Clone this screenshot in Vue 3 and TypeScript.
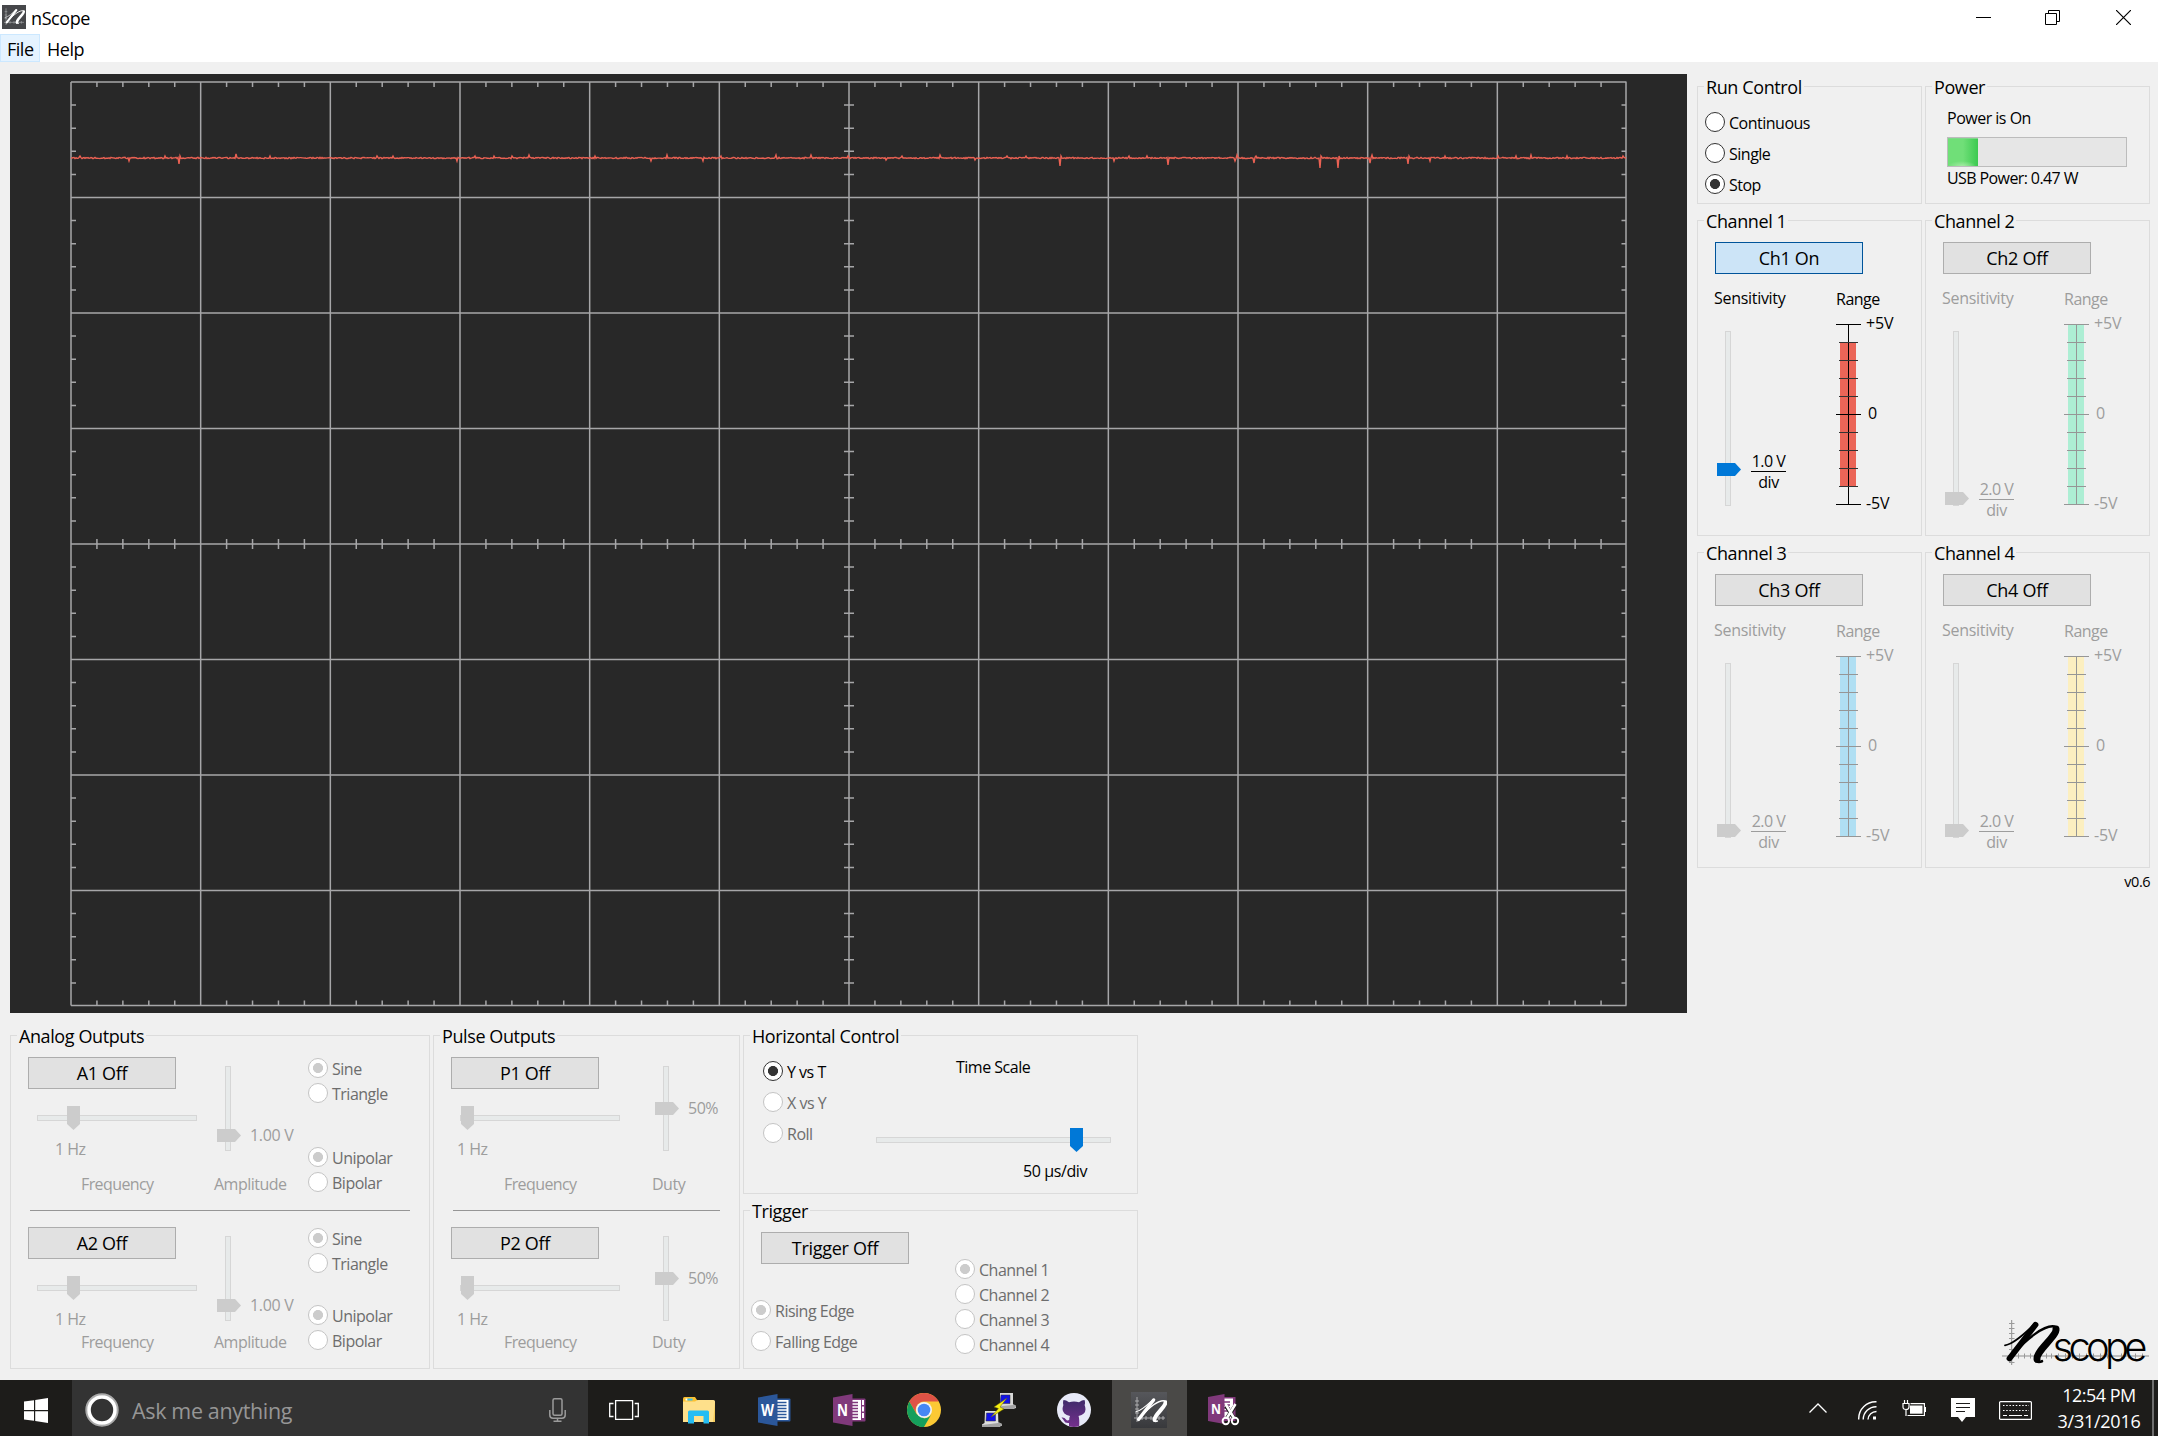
<script setup lang="ts">
interface Channel {
  name: string
  button: string
  on: boolean
  sensitivity: string
  handle: number
  color: string
  rangeTop: number
  rangeHeight: number
}

const channels: Channel[] = [
  { name: 'Channel 1', button: 'Ch1 On', on: true, sensitivity: '1.0 V', handle: 132, color: '#eb6557', rangeTop: 18, rangeHeight: 144 },
  { name: 'Channel 2', button: 'Ch2 Off', on: false, sensitivity: '2.0 V', handle: 161, color: '#adeed4', rangeTop: 0, rangeHeight: 180 },
  { name: 'Channel 3', button: 'Ch3 Off', on: false, sensitivity: '2.0 V', handle: 161, color: '#b0dff3', rangeTop: 0, rangeHeight: 180 },
  { name: 'Channel 4', button: 'Ch4 Off', on: false, sensitivity: '2.0 V', handle: 161, color: '#fcefc0', rangeTop: 0, rangeHeight: 180 },
]

const runModes = [
  { label: 'Continuous', checked: false },
  { label: 'Single', checked: false },
  { label: 'Stop', checked: true },
]
const plotModes = [
  { label: 'Y vs T', checked: true, enabled: true },
  { label: 'X vs Y', checked: false, enabled: false },
  { label: 'Roll', checked: false, enabled: false },
]
const analogOutputs = ['A1 Off', 'A2 Off']
const pulseOutputs = ['P1 Off', 'P2 Off']
const shapes = ['Sine', 'Triangle']
const polarities = ['Unipolar', 'Bipolar']
const edges = ['Rising Edge', 'Falling Edge']
const sources = ['Channel 1', 'Channel 2', 'Channel 3', 'Channel 4']

// Plot geometry: 12 x 8 divisions, five ticks per division
const left = 61
const right = 1616.5
const top = 8
const bottom = 931.5
const midX = 839
const midY = 470
const divX = 129.667
const divY = 115.5

function gridPath(): string {
  let d = `M${left} ${top}H${right}M${left} ${bottom}H${right}M${left} ${top}V${bottom}M${right - 0.5} ${top}V${bottom}`
  for (let i = 1; i < 12; i++) d += `M${left + i * divX} ${top}V${bottom}`
  for (let i = 1; i < 8; i++) d += `M${left} ${top + i * divY}H${right}`
  for (let i = 1; i < 60; i++) {
    if (i % 5 === 0) continue
    const x = left + (i * divX) / 5
    d += `M${x} ${top}v5M${x} ${midY - 5}v10M${x} ${bottom}v-5`
  }
  for (let i = 1; i < 40; i++) {
    if (i % 5 === 0) continue
    const y = top + (i * divY) / 5
    d += `M${left} ${y}h5M${midX - 5} ${y}h10M${right} ${y}h-5`
  }
  return d
}

const spikes: Record<number, number> = {
  70: -2, 119: 3, 155: -2, 169: 6, 170: -2, 226: -4, 260: -2, 367: -2, 383: -2, 447: 3, 465: -2, 484: -2,
  502: -2, 519: -3, 585: -2, 641: 3, 657: -3, 693: 3, 711: -2, 766: -3, 801: -3, 838: -2, 876: 2, 892: -2,
  930: -3, 965: 2, 997: -2, 1016: -2, 1050: 8, 1051: -2, 1104: 3, 1119: -2, 1137: -2, 1158: 7, 1225: 3,
  1227: -3, 1244: 5, 1246: -2, 1310: 10, 1311: -2, 1328: 10, 1329: -2, 1360: 5, 1362: -3, 1398: 6, 1399: -2,
  1420: 3, 1435: -2, 1488: -2, 1506: -2, 1521: -3, 1557: -2, 1613: -2,
}

function tracePath(): string {
  let seed = 17
  const points: string[] = []
  for (let x = left; x <= right; x++) {
    seed = (seed * 1103515245 + 12345) % 2147483648
    const noise = (seed / 2147483648 - 0.5) * 1.3
    points.push(`${x} ${(84 + (spikes[x] ?? noise)).toFixed(2)}`)
  }
  return 'M' + points.join('L')
}

const grid = gridPath()
const trace = tracePath()
</script>

<template>
  <div class="window">
    <svg class="defs" width="0" height="0">
      <symbol id="mark" viewBox="0 0 62 50">
        <g fill="none" stroke="currentColor" stroke-linecap="round">
          <path d="M5 27.3C14 26 25 15 33 7.5" stroke-width="1.8" />
          <path d="M35.500 6.800L9.500 40.500" stroke-width="5.800" />
          <path d="M14 35C26 22 44 6.500 54.500 8.500" stroke-width="2.400" />
          <path d="M56 11C57 18 36 33 37 41" stroke-width="7" />
          <path d="M36 43.200Q39 44.600 42 43.200" stroke-width="2.600" />
        </g>
      </symbol>
    </svg>

    <header class="titlebar">
      <svg class="app-icon" width="24" height="24" viewBox="0 0 36 36">
        <rect width="36" height="36" fill="#46474a" />
        <path d="M6 5V30M3 26H33M4 10h4M4 15h4M4 20h4M12 24v4M18 24v4M24 24v4M29 24v4" stroke="#a5a6a8" fill="none" />
        <use href="#mark" x="2" y="3" width="34" height="29" color="#fff" />
      </svg>
      <span class="app-name">nScope</span>
      <div class="window-buttons">
        <svg width="15" height="15"><path d="M0 7.5H15" stroke="#000" /></svg>
        <svg class="restore" width="15" height="15" fill="none" stroke="#000"><path d="M.5 3.5h11v11H.5zM3.5 3.5v-3h11v11h-3" /></svg>
        <svg width="15" height="15"><path d="M0 0L15 15M15 0L0 15" stroke="#000" stroke-width="1.2" /></svg>
      </div>
    </header>
    <nav class="menubar">
      <span class="menu-item active">File</span>
      <span class="menu-item">Help</span>
    </nav>

    <main class="main">
      <section class="left-side">
        <svg class="scope" width="1677" height="939">
          <path :d="grid" fill="none" stroke="#a6a6a8" stroke-width="1.5" />
          <path :d="trace" fill="none" stroke="#ea6153" stroke-width="1.4" />
        </svg>

        <div class="outputs">
          <div class="group analog">
            <div class="group-title">Analog Outputs</div>
            <template v-for="(name, i) in analogOutputs" :key="name">
              <hr v-if="i" class="separator" />
              <div class="output" :class="{ compact: i }">
                <div class="freq-col">
                  <button class="btn">{{ name }}</button>
                  <div class="hslider off">
                    <i class="groove" />
                    <svg class="thumb" style="left: 30px" width="13" height="24"><path d="M0 0H13V18L6.5 24L0 18Z" /></svg>
                  </div>
                  <div class="text dim hz">1 Hz</div>
                  <div class="text dim caption freq">Frequency</div>
                </div>
                <div class="amp-col">
                  <div class="slider-row">
                    <div class="vslider off">
                      <i class="groove" />
                      <svg class="thumb" style="top: 63px" width="24" height="13"><path d="M0 0V13H18L24 6.5L18 0Z" /></svg>
                    </div>
                    <div class="text dim amp-value">1.00 V</div>
                  </div>
                  <div class="text dim caption">Amplitude</div>
                </div>
                <div class="radios tight">
                  <label v-for="(s, k) in shapes" :key="s" class="radio off" :class="{ checked: k === 0 }"><i /><span>{{ s }}</span></label>
                  <label v-for="(s, k) in polarities" :key="s" class="radio off" :class="{ checked: k === 0, second: k === 0 }"><i /><span>{{ s }}</span></label>
                </div>
              </div>
            </template>
          </div>

          <div class="group pulse">
            <div class="group-title">Pulse Outputs</div>
            <template v-for="(name, i) in pulseOutputs" :key="name">
              <hr v-if="i" class="separator" />
              <div class="output" :class="{ compact: i }">
                <div class="freq-col">
                  <button class="btn">{{ name }}</button>
                  <div class="hslider off">
                    <i class="groove" />
                    <svg class="thumb" style="left: 1px" width="13" height="24"><path d="M0 0H13V18L6.5 24L0 18Z" /></svg>
                  </div>
                  <div class="text dim hz">1 Hz</div>
                  <div class="text dim caption freq">Frequency</div>
                </div>
                <div class="amp-col">
                  <div class="slider-row">
                    <div class="vslider off">
                      <i class="groove" />
                      <svg class="thumb" style="top: 36px" width="24" height="13"><path d="M0 0V13H18L24 6.5L18 0Z" /></svg>
                    </div>
                    <div class="text dim duty-value">50%</div>
                  </div>
                  <div class="text dim caption">Duty</div>
                </div>
              </div>
            </template>
          </div>

          <div class="stack">
            <div class="group horizontal">
              <div class="group-title">Horizontal Control</div>
              <div class="row">
                <div class="radios plot-modes">
                  <label v-for="m in plotModes" :key="m.label" class="radio" :class="{ checked: m.checked, off: !m.enabled }"><i /><span>{{ m.label }}</span></label>
                </div>
                <div class="time-col">
                  <div class="text time-title">Time Scale</div>
                  <div class="hslider">
                    <i class="groove" />
                    <svg class="thumb" style="left: 194px" width="13" height="24"><path d="M0 0H13V18L6.5 24L0 18Z" /></svg>
                  </div>
                  <div class="text time-value">50 µs/div</div>
                </div>
              </div>
            </div>
            <div class="group trigger">
              <div class="group-title">Trigger</div>
              <div class="row">
                <div class="trigger-col">
                  <button class="btn">Trigger Off</button>
                  <div class="radios">
                    <label v-for="(e, k) in edges" :key="e" class="radio off" :class="{ checked: k === 0 }"><i /><span>{{ e }}</span></label>
                  </div>
                </div>
                <div class="radios tight sources">
                  <label v-for="(s, k) in sources" :key="s" class="radio off" :class="{ checked: k === 0 }"><i /><span>{{ s }}</span></label>
                </div>
              </div>
            </div>
          </div>
        </div>
      </section>

      <aside class="right-side">
        <div class="panels">
          <div class="group run">
            <div class="group-title">Run Control</div>
            <div class="radios run-modes">
              <label v-for="m in runModes" :key="m.label" class="radio" :class="{ checked: m.checked }"><i /><span>{{ m.label }}</span></label>
            </div>
          </div>
          <div class="group power">
            <div class="group-title">Power</div>
            <div class="power-body">
              <div class="text">Power is On</div>
              <div class="progress"><div class="fill" /></div>
              <div class="text usb">USB Power: 0.47 W</div>
            </div>
          </div>

          <div v-for="c in channels" :key="c.name" class="group channel" :class="{ disabled: !c.on }">
            <div class="group-title">{{ c.name }}</div>
            <button class="btn" :class="{ on: c.on }">{{ c.button }}</button>
            <div class="row">
              <div class="sens-col">
                <div class="text sens-title">Sensitivity</div>
                <div class="slider-row">
                  <div class="vslider" :class="{ off: !c.on }">
                    <i class="groove" />
                    <svg class="thumb" :style="{ top: c.handle + 'px' }" width="24" height="13"><path d="M0 0V13H18L24 6.5L18 0Z" /></svg>
                  </div>
                  <div class="fraction" :style="{ marginTop: (c.on ? 120 : 148) + 'px' }">
                    <div class="text">{{ c.sensitivity }}</div>
                    <div class="text divisor">div</div>
                  </div>
                </div>
              </div>
              <div class="range-col">
                <div class="text range-title">Range</div>
                <div class="row">
                  <svg class="gauge" width="25" height="181">
                    <rect x="4" :y="c.rangeTop" width="16" :height="c.rangeHeight" :fill="c.color" />
                    <g :stroke="c.on ? '#000' : '#969696'">
                      <path d="M12.5 0V181M0 .5H25M0 90.5H25M0 180.5H25" />
                      <path v-for="n in [1, 2, 3, 4, 6, 7, 8, 9]" :key="n" :d="`M3 ${n * 18 + 0.5}H22`" :stroke="c.on ? '#333' : '#969696'" />
                    </g>
                  </svg>
                  <div class="scale">
                    <span class="text">+5V</span>
                    <span class="text zero">0</span>
                    <span class="text">-5V</span>
                  </div>
                </div>
              </div>
            </div>
          </div>
        </div>
        <div class="version">v0.6</div>
        <svg class="logo" width="150" height="54">
          <path d="M11.7 2V47M2 38H149" stroke="#8d8d8d" fill="none" />
          <path d="M9 5.5h5.5M9 10.5h5.5M9 15.5h5.5M9 20.5h5.5M9 31.5h5.5M9 44.5h5.5M18.5 35.5v5M24.5 35.5v5M30.5 35.5v5M46.5 35.5v5M51.5 35.5v5M58.5 35.5v5M65.5 35.5v5M72.5 35.5v5M79.5 35.5v5M86.5 35.5v5M93.5 35.5v5M100.5 35.5v5M107.5 35.5v5M121.5 35.5v5M128.5 35.5v5M135.5 35.5v5M142.5 35.5v5" stroke="#999" fill="none" />
          <use href="#mark" width="62" height="50" color="#000" />
          <text x="52.5" y="43" textLength="95" lengthAdjust="spacing" class="logo-text">scope</text>
        </svg>
      </aside>
    </main>

    <footer class="taskbar">
      <div class="start">
        <svg width="24" height="25" viewBox="0 0 24 25" fill="#fff"><path d="M0 3.6L10 2.2V12H0zM11.2 2L24 0V12H11.2zM0 13.2H10V22.8L0 21.4zM11.2 13.2H24V25L11.2 23.1z" /></svg>
      </div>
      <div class="search">
        <svg class="cortana" width="34" height="34"><circle cx="17" cy="17" r="15.5" fill="none" stroke="#aaa" stroke-width="2.4" /><circle cx="17" cy="17" r="13" fill="none" stroke="#fff" stroke-width="3.6" /></svg>
        <span class="search-text">Ask me anything</span>
        <svg class="mic" width="17" height="24" fill="none" stroke="#9b9b9b" stroke-width="1.5"><rect x="4" y=".8" width="9" height="16.5" rx="1.5" /><path d="M.8 12v5q0 3.2 3.2 3.2h9q3.2 0 3.2-3.2v-5M8.500 20v3M4.500 23.200h8" /></svg>
      </div>
      <div class="apps">
        <div class="slot">
          <svg width="30" height="20" fill="none" stroke="#fff" stroke-width="1.3"><path d="M6.600 .7h17v18.600h-17zM4.500 3.500H.7v13h3.800M25.700 3.500h3.600v13h-3.600" /></svg>
        </div>
        <div class="slot">
          <svg width="32" height="28" viewBox="0 0 32 28"><path d="M0 2.500Q0 1 1.500 1H12l2 3v3H0z" fill="#fbc02f" /><rect x="2.500" y="2.500" width="2" height="2" fill="#fff" /><rect x="4.500" y="2.500" width="5" height="2" fill="#39c0f0" /><path d="M0 5.500H12L14.500 4H30.500Q32 4 32 5.500V26H0z" fill="#fee08b" /><path d="M30 26H32V6z" fill="#f5cb5c" /><path d="M5 27.500V16q0-1.500 1.500-1.500h18q1.500 0 1.500 1.500V27.500H20.500V20H11v7.500z" fill="#25bdf3" /></svg>
        </div>
        <div class="slot">
          <svg width="33" height="32" viewBox="0 0 33 32"><path d="M18 4.500H31.500Q32.500 4.500 32.500 5.500V26.500Q32.500 27.500 31.500 27.500H18z" fill="#2b579a" /><rect x="19" y="6" width="11.500" height="20" fill="#fff" /><path d="M19 8.500h9.500M19 11.500h9.500M19 14.500h9.500M19 17.500h9.500M19 20.500h9.500M19 23.500h9.500" stroke="#2b579a" stroke-width="1.3" /><path d="M0 3.500L19.500 0V32L0 28.500z" fill="#2b579a" /><text x="3" y="22" font-size="16" font-weight="700" fill="#fff" textLength="13" lengthAdjust="spacingAndGlyphs">W</text></svg>
        </div>
        <div class="slot">
          <svg width="33" height="32" viewBox="0 0 33 32"><path d="M18 4.500H31.500Q32.500 4.500 32.500 5.500V26.500Q32.500 27.500 31.500 27.500H18z" fill="#80397b" /><rect x="19" y="6" width="9" height="20" fill="#fff" /><path d="M29 6h2v5h-2zM29 12.500h2v5h-2zM29 19h2v5h-2z" fill="#fff" /><path d="M19 8.500h6M19 11.500h6M19 14.500h6M19 17.500h6M19 20.500h6M19 23.500h6" stroke="#80397b" stroke-width="1.3" /><path d="M0 3.500L19.500 0V32L0 28.500z" fill="#80397b" /><text x="4" y="22" font-size="16" font-weight="700" fill="#fff" textLength="11" lengthAdjust="spacingAndGlyphs">N</text></svg>
        </div>
        <div class="slot">
          <svg width="34" height="34" viewBox="0 0 34 34"><circle cx="17" cy="17" r="17" fill="#fcc934" /><path d="M2.300 8.500A17 17 0 0 1 31.700 8.500H17A8.500 8.500 0 0 0 9.600 21z" fill="#de5246" /><path d="M2.300 8.500L9.700 21.200A17 17 0 0 0 17 24L14.800 33.900A17 17 0 0 1 2.300 8.500z" fill="#159f5c" /><path d="M9.700 21.200A8.500 8.500 0 0 0 24.400 21.200L17 33.900H15A17 17 0 0 1 5 29z" fill="#159f5c" /><circle cx="17" cy="17" r="8" fill="#f3f3f3" /><circle cx="17" cy="17" r="6.300" fill="#4687f4" /></svg>
        </div>
        <div class="slot">
          <svg width="34" height="34" viewBox="0 0 34 34"><path d="M18 0H31V12L34 13.500V15L31 16H16V13L18 12z" fill="#d8d8d8" /><path d="M31 0V12L16 13.500V16H31L34 14V12.500L31 11z" fill="#a5a5a5" /><path d="M19 2H28V10.500H18z" fill="#1212e6" stroke="#333" stroke-width=".5" /><path d="M3 18H16V29.500L20 31V32.500L17 34H0V31.500L2.500 30z" fill="#dedede" /><path d="M16 18V30L0 32V34H17L20 32V31L16.500 29z" fill="#a2a2a2" /><path d="M4.500 20H13.500V28H4z" fill="#1212e6" stroke="#333" stroke-width=".5" /><path d="M25 5L12 14L16.500 15.500L9 24L22 16L18 14z" fill="#f5ee12" stroke="#666000" stroke-width=".5" /></svg>
        </div>
        <div class="slot">
          <svg width="34" height="34" viewBox="0 0 34 34"><defs><linearGradient id="cat" x1="0" x2="0" y1="0" y2="1"><stop offset="0" stop-color="#3f2a6b" /><stop offset="1" stop-color="#74308c" /></linearGradient></defs><circle cx="17" cy="17" r="17" fill="#e7e9f7" /><path d="M6.500 7Q9 7 12 9.200Q17 8 22 9.200Q25 7 27.500 7Q28.500 9.500 27.600 12Q31 21 21.500 23Q22.500 25 22.200 33A17 17 0 0 1 12 33.200V30Q8 30.500 6.800 27.500Q6 26 4.500 24.500Q7.500 24 9 26.500Q10 28 12.200 27Q12.200 24.500 13 23Q3 21 6.400 12Q5.600 9.500 6.500 7z" fill="url(#cat)" /></svg>
        </div>
        <div class="slot active">
          <svg width="36" height="36" viewBox="0 0 36 36"><defs><linearGradient id="tile" x1="0" x2="0" y1="0" y2="1"><stop offset="0" stop-color="#56575b" /><stop offset="1" stop-color="#38393c" /></linearGradient></defs><rect width="36" height="36" fill="url(#tile)" /><path d="M6 5V30M3 26H34M4 9h4M4 13h4M4 17h4M4 21h4M11 24v4M15 24v4M20 24v4M24 24v4M28 24v4M32 24v4" stroke="#b5b5b8" stroke-width=".9" fill="none" /><use href="#mark" x="2" y="4" width="36" height="29" color="#fff" /></svg>
        </div>
        <div class="slot">
          <svg width="32" height="32" viewBox="0 0 32 32"><path d="M15 3H27.500V27H15z" fill="#80397b" /><rect x="16" y="4.500" width="9" height="20" fill="#fff" /><path d="M16 8h6M16 11h6M16 14h6M16 17h6" stroke="#80397b" stroke-width="1.300" /><path d="M0 3L16.500 0V30L0 27z" fill="#80397b" /><text x="3" y="20" font-size="15" font-weight="700" fill="#fff" textLength="10" lengthAdjust="spacingAndGlyphs">N</text><g fill="none" stroke="#1e1d1b" stroke-width="4"><path d="M18 12L26 24M27 12L19 24" /></g><g fill="none" stroke="#fff" stroke-width="2.500"><path d="M17.500 10L26 24M27.500 10L19 24" /><ellipse cx="17.800" cy="27" rx="3.200" ry="3.300" stroke-width="1.900" /><ellipse cx="27" cy="27" rx="3.200" ry="3.300" stroke-width="1.900" /></g></svg>
        </div>
      </div>

      <div class="tray">
        <svg class="chevron" width="18" height="10" fill="none" stroke="#fff" stroke-width="1.300"><path d="M.5 9.500L9 1L17.500 9.500" /></svg>
        <svg class="wifi" width="19" height="19" fill="none" stroke="#fff" stroke-width="1.400"><path d="M.7 18.500V18A17 17 0 0 1 18.500 .8M5.200 18.500A13 13 0 0 1 18.500 5.700M10 18.500A8.500 8.500 0 0 1 18.500 10.500" /><rect x="15" y="15.500" width="3" height="3" fill="#fff" stroke="none" /></svg>
        <svg class="battery" width="24" height="17" fill="none" stroke="#fff" stroke-width="1.200"><path d="M8.500 3.600H22.400V15.500H5.500M22.400 7.500h1v4h-1" /><rect x="8" y="5.500" width="12.500" height="8.200" fill="#fff" stroke="none" /><path d="M1 3.500H7V7q0 2.500-3 2.500T1 7zM2.500 0V3.500M5.500 0V3.500M4 9.500V16" fill="#1c1b1a" /></svg>
        <svg class="note" width="24" height="24"><path d="M0 0H24V19H15L11 24L7 19H0z" fill="#fff" /><path d="M5 5.500H19M5 9.500H19M5 13.500H14" stroke="#1c1b1a" /></svg>
        <svg class="keyboard" width="33" height="19" fill="none" stroke="#fff" stroke-width="1.200"><rect x=".6" y=".6" width="31.800" height="17.800" rx="1" /><path d="M4 4.500H30M4 9.500H30" stroke-dasharray="1.500 1.700" /><path d="M4 14.500H8M10 14.500H23M25 14.500H29" /></svg>
        <div class="clock"><span>12:54 PM</span><span class="date">3/31/2016</span></div>
        <i class="show-desktop" />
      </div>
    </footer>
  </div>
</template>

<style>
body {
  margin: 0;
}
</style>

<style scoped>
.window {
  width: 2158px;
  height: 1436px;
  display: flex;
  flex-direction: column;
  overflow: hidden;
  background: #f0f0f0;
  color: #000;
  font-family: 'Open Sans', 'Noto Sans', sans-serif;
  font-size: 16px;
  letter-spacing: -0.5px;
  white-space: nowrap;
}
.defs {
  position: absolute;
}
svg {
  display: block;
  flex: none;
}
.titlebar {
  height: 34px;
  background: #fff;
  display: flex;
  align-items: center;
  padding: 0 27px 0 2px;
}
.app-name {
  font-size: 18px;
  margin: 1px 0 0 5px;
  letter-spacing: -0.400px;
}
.window-buttons {
  margin-left: auto;
  display: flex;
}
.restore {
  margin: 0 56px 0 54px;
}
.menubar {
  height: 28px;
  background: #fff;
  display: flex;
}
.menu-item {
  box-sizing: border-box;
  height: 28px;
  line-height: 30px;
  padding: 0 7px;
  font-size: 18px;
}
.menu-item.active {
  width: 40px;
  padding: 0 6px;
  line-height: 28px;
  background: #e5f3ff;
  border: 1px solid #cce8ff;
}
.main {
  height: 1318px;
  box-sizing: border-box;
  padding: 12px 8px 8px 10px;
  display: grid;
  grid-template-columns: 1677px 453px;
  column-gap: 10px;
}
.scope {
  background: #282828;
}
.outputs {
  display: flex;
  margin-top: 22px;
}
.group {
  box-sizing: border-box;
  border: 1px solid #dcdcdc;
  display: flex;
  flex-direction: column;
  align-items: flex-start;
}
.group-title {
  height: 24px;
  line-height: 24px;
  margin: -12px 0 1px 6px;
  padding: 0 2px;
  background: #f0f0f0;
  font-size: 18px;
  letter-spacing: -0.4px;
}
.row,
.slider-row {
  display: flex;
  align-items: flex-start;
}
.text {
  font-size: 16px;
  line-height: 20px;
  height: 20px;
}
.dim,
.disabled .text {
  color: #9d9d9d;
}
.btn {
  display: block;
  box-sizing: border-box;
  width: 148px;
  height: 32px;
  padding: 0 0 1px;
  border: 1px solid #adadad;
  background: #e1e1e1;
  color: #000;
  font: 18px 'Open Sans', 'Noto Sans', sans-serif;
  letter-spacing: -0.3px;
}
.btn.on {
  background: #cce4f7;
  border-color: #00549a;
}

.radios {
  display: flex;
  flex-direction: column;
  gap: 11px;
}
.radios.tight {
  gap: 5px;
}
.radio {
  display: flex;
  align-items: center;
  height: 20px;
}
.radio i {
  box-sizing: border-box;
  width: 20px;
  height: 20px;
  border: 1px solid #333;
  border-radius: 50%;
  background: #fff;
}
.radio.checked i {
  background: radial-gradient(circle, #333 4.700px, #fff 5.300px);
}
.radio span {
  margin: 1px 0 0 4px;
  line-height: 20px;
}
.radio.off {
  color: #6d6d6d;
}
.radio.off i {
  border-color: #c4c4c4;
}
.radio.off.checked i {
  background: radial-gradient(circle, #ccc 4.700px, #fff 5.300px);
}

.hslider {
  position: relative;
  width: 160px;
  height: 24px;
  display: flex;
  align-items: center;
}
.vslider {
  position: relative;
  width: 24px;
  height: 85px;
  display: flex;
  justify-content: center;
}
.groove {
  box-sizing: border-box;
  background: #e7eaea;
  border: 1px solid #d6d6d6;
}
.hslider .groove {
  width: 100%;
  height: 6px;
}
.vslider .groove {
  height: 100%;
  width: 6px;
  margin-right: 2px;
}
.thumb {
  position: absolute;
  fill: #0078d7;
}
.vslider .thumb {
  left: 0;
}
.off .thumb {
  fill: #ccc;
}

.analog {
  width: 420px;
  height: 334px;
}
.pulse {
  width: 307px;
  height: 334px;
  margin-left: 3px;
}
.output {
  display: flex;
  height: 153px;
  margin: 8px 0 0 17px;
}
.output.compact {
  margin-top: 16px;
  height: 140px;
}
.separator {
  width: 380px;
  height: 1px;
  margin: 0 0 0 19px;
  border: 0;
  background: #969696;
}
.pulse .separator {
  width: 267px;
}
.freq-col {
  width: 186px;
}
.pulse .freq-col {
  width: 201px;
}
.freq-col .hslider {
  margin: 17px 0 0 9px;
}
.hz {
  margin: 9px 0 0 27px;
}
.pulse .hz {
  margin-left: 6px;
}
.freq {
  margin: 15px 0 0 53px;
  letter-spacing: -0.6px;
}
.compact .freq {
  margin-top: 3px;
}
.amp-col {
  width: 94px;
}
.amp-col .slider-row {
  margin: 9px 0 0 3px;
}
.amp-value {
  margin: 59px 0 0 9px;
  letter-spacing: -0.300px;
}
.duty-value {
  margin: 32px 0 0 9px;
}
.amp-col .caption {
  margin-top: 23px;
}
.compact .amp-col .caption {
  margin-top: 11px;
}
.output .radios {
  margin-top: 1px;
}
.radio.second {
  margin-top: 39px;
}
.compact .radio.second {
  margin-top: 27px;
}

.stack {
  margin-left: 3px;
  display: flex;
  flex-direction: column;
  gap: 16px;
}
.stack .group {
  width: 395px;
  height: 159px;
}
.plot-modes {
  width: 113px;
  margin: 12px 0 0 19px;
}
.time-title {
  margin: 8px 0 0 80px;
}
.time-col .hslider {
  width: 235px;
  margin-top: 51px;
}
.time-value {
  margin: 9px 0 0 147px;
  letter-spacing: -0.400px;
}
.trigger-col {
  width: 204px;
  margin-left: 7px;
}
.trigger-col .btn {
  margin: 8px 0 0 10px;
}
.trigger-col .radios {
  margin-top: 36px;
}
.sources {
  margin-top: 35px;
}

.right-side {
  display: flex;
  flex-direction: column;
}
.panels {
  margin-top: 12px;
  display: grid;
  grid-template-columns: 225px 225px;
  grid-template-rows: 118px 316px 316px;
  gap: 16px 3px;
}
.run-modes {
  margin: 12px 0 0 7px;
}
.power-body {
  margin: 8px 0 0 21px;
}
.progress {
  box-sizing: border-box;
  width: 180px;
  height: 30px;
  margin-top: 9px;
  border: 1px solid #bcbcbc;
  background: #e6e6e6;
}
.fill {
  width: 30px;
  height: 28px;
  background: radial-gradient(ellipse 14px 5px at 14px 28px, #a3eaa3, transparent), linear-gradient(90deg, #70df78 50%, #3cca51);
  box-shadow: inset 0 1px #7fd98a;
}
.usb {
  margin-top: 1px;
  letter-spacing: -0.600px;
}
.channel .btn {
  margin: 8px 0 0 17px;
}
.sens-col {
  width: 121px;
  margin-left: 17px;
}
.sens-title {
  margin: 14px 0 0 -1px;
  letter-spacing: -0.300px;
}
.sens-col .slider-row {
  margin: 23px 0 0 2px;
}
.sens-col .vslider {
  height: 175px;
}
.fraction {
  width: 35px;
  margin-left: 10px;
  text-align: center;
}
.divisor {
  border-top: 1px solid currentColor;
}
.range-title {
  margin: 15px 0 0 0;
}
.gauge {
  margin-top: 15px;
}
.scale {
  height: 200px;
  margin: 4px 0 0 5px;
  display: flex;
  flex-direction: column;
  justify-content: space-between;
  letter-spacing: -0.200px;
}
.zero {
  margin-left: 2px;
}
.version {
  align-self: flex-end;
  margin-top: 4px;
  font-size: 14.500px;
  line-height: 20px;
}
.logo {
  margin: auto 0 0 303px;
}
.logo-text {
  font-family: 'Inter', 'Liberation Sans', sans-serif;
  font-weight: 300;
  font-size: 40px;
  letter-spacing: 0;
}

.taskbar {
  height: 56px;
  display: flex;
  background: #1d1c1a;
}
.start {
  width: 72px;
  display: flex;
  align-items: center;
  justify-content: center;
  padding-top: 4px;
  box-sizing: border-box;
}
.search {
  width: 516px;
  box-sizing: border-box;
  padding: 4px 22px 0 13px;
  background: #333;
  display: flex;
  align-items: center;
}
.search-text {
  margin-left: 13px;
  font-size: 21.500px;
  letter-spacing: -0.350px;
  color: #969696;
}
.mic {
  margin-left: auto;
}
.apps {
  display: flex;
  margin-left: -1px;
}
.slot {
  width: 75px;
  padding: 4px 1px 0 0;
  box-sizing: border-box;
  display: flex;
  align-items: center;
  justify-content: center;
}
.slot text {
  letter-spacing: 0;
}
.slot.active {
  background: #4a4947;
}
.tray {
  margin-left: auto;
  display: flex;
  align-items: center;
}
.wifi {
  margin-left: 31px;
}
.battery {
  margin-left: 25px;
}
.note {
  margin-left: 25px;
}
.keyboard {
  margin-left: 24px;
}
.wifi,
.note,
.keyboard {
  margin-top: 4px;
}
.clock {
  width: 90px;
  margin-left: 22px;
  display: flex;
  flex-direction: column;
  align-items: center;
  color: #fff;
  font-size: 18px;
  line-height: 26px;
}
.date {
  letter-spacing: -0.250px;
}
.show-desktop {
  width: 2px;
  height: 56px;
  margin: 0 4px 0 8px;
  background: #6e6e6e;
}
</style>
